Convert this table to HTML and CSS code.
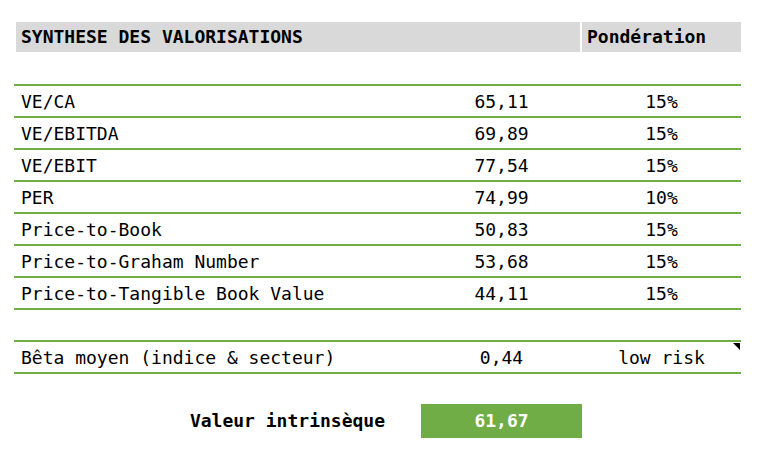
FILE: index.html
```html
<!DOCTYPE html>
<html lang="fr">
<head>
<meta charset="utf-8">
<title>Synthèse des valorisations</title>
<link rel="stylesheet" href="styles.css">
</head>
<body>
<div class="sheet">
  <div class="head">
    <div class="hcell hmain">SYNTHESE DES VALORISATIONS</div>
    <div class="hcell hweight">Pondération</div>
  </div>
  <div class="spacer"></div>
  <div class="group">
    <div class="row"><div class="c1">VE/CA</div><div class="c2">65,11</div><div class="c3">15%</div></div>
    <div class="row"><div class="c1">VE/EBITDA</div><div class="c2">69,89</div><div class="c3">15%</div></div>
    <div class="row"><div class="c1">VE/EBIT</div><div class="c2">77,54</div><div class="c3">15%</div></div>
    <div class="row"><div class="c1">PER</div><div class="c2">74,99</div><div class="c3">10%</div></div>
    <div class="row"><div class="c1">Price-to-Book</div><div class="c2">50,83</div><div class="c3">15%</div></div>
    <div class="row"><div class="c1">Price-to-Graham Number</div><div class="c2">53,68</div><div class="c3">15%</div></div>
    <div class="row"><div class="c1">Price-to-Tangible Book Value</div><div class="c2">44,11</div><div class="c3">15%</div></div>
  </div>
  <div class="gap-row"></div>
  <div class="group">
    <div class="row"><div class="c1">Bêta moyen (indice &amp; secteur)</div><div class="c2">0,44</div><div class="c3 note">low risk<span class="comment"></span></div></div>
  </div>
  <div class="total">
    <div class="total-label">Valeur intrinsèque</div>
    <div class="total-value">61,67</div>
  </div>
</div>
</body>
</html>
```

FILE: styles.css
```css
* { box-sizing: border-box; }
html, body { margin: 0; padding: 0; background: #ffffff; }
body {
  font-family: "DejaVu Sans Mono", "Liberation Mono", monospace;
  font-size: 18px;
  color: #000000;
}
.sheet {
  width: 762px;
  height: 460px;
  padding: 22px 0 0 14px;
}
.head {
  display: flex;
  gap: 2px;
  margin-left: 2px;
  width: 725px;
  height: 30px;
}
.hcell {
  background: #d9d9d9;
  font-weight: bold;
  line-height: 30px;
  padding-left: 5px;
}
.hmain { width: 564px; }
.hweight { width: 159px; }
.spacer { height: 32px; }
.group {
  width: 727px;
  border-top: 2px solid #70ad47;
}
.row {
  display: flex;
  height: 32px;
  border-bottom: 2px solid #70ad47;
  line-height: 31px;
}
.c1 { width: 407px; padding-left: 7px; white-space: pre; }
.c2 { width: 161px; text-align: center; }
.c3 { width: 159px; text-align: center; }
.note { position: relative; }
.comment {
  position: absolute;
  top: 1px;
  right: 1px;
  width: 0;
  height: 0;
  border-top: 7px solid #000000;
  border-left: 7px solid transparent;
}
.gap-row { height: 30px; }
.total {
  display: flex;
  margin-top: 30px;
  height: 34px;
  line-height: 34px;
}
.total-label {
  width: 407px;
  text-align: right;
  padding-right: 36px;
  font-weight: bold;
}
.total-value {
  width: 161px;
  background: #70ad47;
  color: #ffffff;
  font-weight: bold;
  text-align: center;
}
```
